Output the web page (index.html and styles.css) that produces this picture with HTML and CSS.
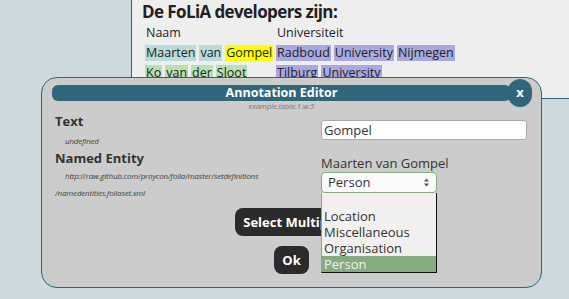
FILE: index.html
```html
<!DOCTYPE html>
<html>
<head>
<meta charset="utf-8">
<link rel="stylesheet" href="styles.css">
</head>
<body>
<div class="doc">
  <h1 class="doc-title">De FoLiA developers zijn:</h1>
  <div class="tbl">
    <div class="row">
      <div class="cell c1"><span class="w">Naam</span></div>
      <div class="cell"><span class="w">Universiteit</span></div>
    </div>
    <div class="row">
      <div class="cell c1"><span class="w per">Maarten</span><span class="w per">van</span><span class="w sel">Gompel</span></div>
      <div class="cell"><span class="w org">Radboud</span><span class="w org">University</span><span class="w org">Nijmegen</span></div>
    </div>
    <div class="row">
      <div class="cell c1"><span class="w per2">Ko</span><span class="w per2">van</span><span class="w per2">der</span><span class="w per2">Sloot</span></div>
      <div class="cell"><span class="w org">Tilburg</span><span class="w org">University</span></div>
    </div>
  </div>
</div>

<div class="editor">
  <div class="titlebar">Annotation Editor</div>
  <div class="close">x</div>
  <div class="target">example.table.1.w.5</div>
  <div class="fields">
    <div class="left">
      <div class="lbl">Text</div>
      <div class="set">undefined</div>
      <div class="lbl lbl2">Named Entity</div>
      <div class="set">http://raw.github.com/proycon/folia/master/setdefinitions</div>
      <div class="set set2">/namedentities.foliaset.xml</div>
    </div>
    <div class="right">
      <div class="input">Gompel</div>
      <div class="ref">Maarten van Gompel</div>
      <div class="select">Person
        <svg class="arrows" width="7" height="11" viewBox="0 0 7 11"><path d="M1 4.5 L3.5 1.5 L6 4.5 Z M1 6.5 L3.5 9.5 L6 6.5 Z" fill="#555"/></svg>
      </div>
    </div>
  </div>
  <div class="buttons">
    <div class="btn">Select Multiple</div>
    <div class="btn">Ok</div>
  </div>
  <div class="dropdown">
    <div class="opt">&nbsp;</div>
    <div class="opt">Location</div>
    <div class="opt">Miscellaneous</div>
    <div class="opt">Organisation</div>
    <div class="opt on">Person</div>
  </div>
</div>
</body>
</html>
```
FILE: styles.css
```css
html, body {
  margin: 0;
  padding: 0;
}
body {
  background: #ccd9df;
  font-family: "Open Sans", "Noto Sans", sans-serif;
  color: #222;
  width: 569px;
  height: 299px;
  overflow: hidden;
  position: relative;
}
.doc {
  margin-left: 131px;
  height: 99px;
  box-sizing: border-box;
  background: #eeeeee;
  border-left: 1px solid #3b5f6d;
  border-bottom: 1px solid #2f6679;
  padding: 1px 0 0 10px;
}
.doc-title {
  margin: 0;
  font-size: 17px;
  font-weight: bold;
  line-height: 22px;
  color: #222;
  letter-spacing: -0.6px;
}
.tbl {
  padding-left: 3px;
}
.row {
  display: flex;
  height: 20px;
  align-items: center;
}
.cell {
  display: flex;
  gap: 3px;
}
.c1 {
  width: 131px;
}
.w {
  font-size: 12.5px;
  line-height: 16px;
  padding: 0 1px;
  color: #222;
}
.per { background: #b9dcdb; }
.per2 { background: #b5e2b1; }
.sel { background: #ffff00; }
.org { background: #a9a9df; }

.editor {
  position: absolute;
  left: 41px;
  top: 77px;
  width: 501px;
  height: 211px;
  box-sizing: border-box;
  background: #cccccc;
  border: 1px solid #2f6679;
  border-radius: 16px;
  padding: 7px 10px 0 10px;
}
.titlebar {
  height: 16px;
  background: #2f6679;
  border-radius: 6px;
  color: #fff;
  font-weight: bold;
  font-size: 12.5px;
  line-height: 16px;
  text-align: center;
  margin-right: 20px;
}
.close {
  position: absolute;
  right: 9px;
  top: 1px;
  width: 24px;
  height: 28px;
  border-radius: 12px;
  background: #2f6679;
  color: #fff;
  font-weight: bold;
  font-size: 13px;
  line-height: 27px;
  text-align: center;
}
.target {
  text-align: center;
  font-size: 7.5px;
  font-style: italic;
  color: #777;
  line-height: 10px;
  margin-right: 20px;
}
.fields {
  display: flex;
  height: 96px;
  margin-top: 1px;
}
.left {
  width: 266px;
  padding-left: 3px;
  padding-top: 1px;
}
.lbl {
  font-weight: bold;
  font-size: 13px;
  line-height: 17px;
  color: #333;
}
.set {
  font-size: 8px;
  font-style: italic;
  color: #444;
  line-height: 17px;
  padding-left: 10px;
  margin-top: 2px;
  letter-spacing: -0.2px;
}
.set + .lbl { margin-top: 1px; }
.lbl2 + .set { margin-top: 0; }
.set2 {
  padding-left: 0;
  margin-top: 0;
}
.right {
  padding-top: 8px;
}
.input {
  width: 206px;
  height: 20px;
  box-sizing: border-box;
  background: #fff;
  border: 1px solid #aaa;
  border-radius: 3px;
  font-size: 13px;
  line-height: 18px;
  padding-left: 2px;
  color: #333;
}
.ref {
  margin-top: 15px;
  font-size: 13px;
  line-height: 17px;
  color: #333;
}
.select {
  width: 116px;
  height: 21px;
  box-sizing: border-box;
  background: #fafafa;
  border: 1px solid #86ab80;
  border-radius: 4px;
  font-size: 13px;
  line-height: 19px;
  padding-left: 6px;
  color: #333;
  position: relative;
}
.arrows {
  position: absolute;
  right: 6px;
  top: 4px;
}
.buttons {
  display: flex;
  flex-direction: column;
  align-items: center;
  gap: 10px;
}
.btn {
  background: #2b2b2b;
  color: #fff;
  font-weight: bold;
  font-size: 13px;
  height: 28px;
  line-height: 28px;
  border-radius: 8px;
  padding: 0 8px;
}
.dropdown {
  position: absolute;
  left: 279px;
  top: 115px;
  width: 116px;
  height: 80px;
  box-sizing: border-box;
  background: #f2f0ef;
  border-right: 1px solid #111;
  border-bottom: 1px solid #111;
  border-left: 1px solid #999;
}
.opt {
  font-size: 13px;
  line-height: 16px;
  padding-left: 2px;
  color: #333;
}
.opt:first-child {
  line-height: 15px;
}
.opt.on {
  background: #86ab80;
  color: #f2f2f2;
}
```
